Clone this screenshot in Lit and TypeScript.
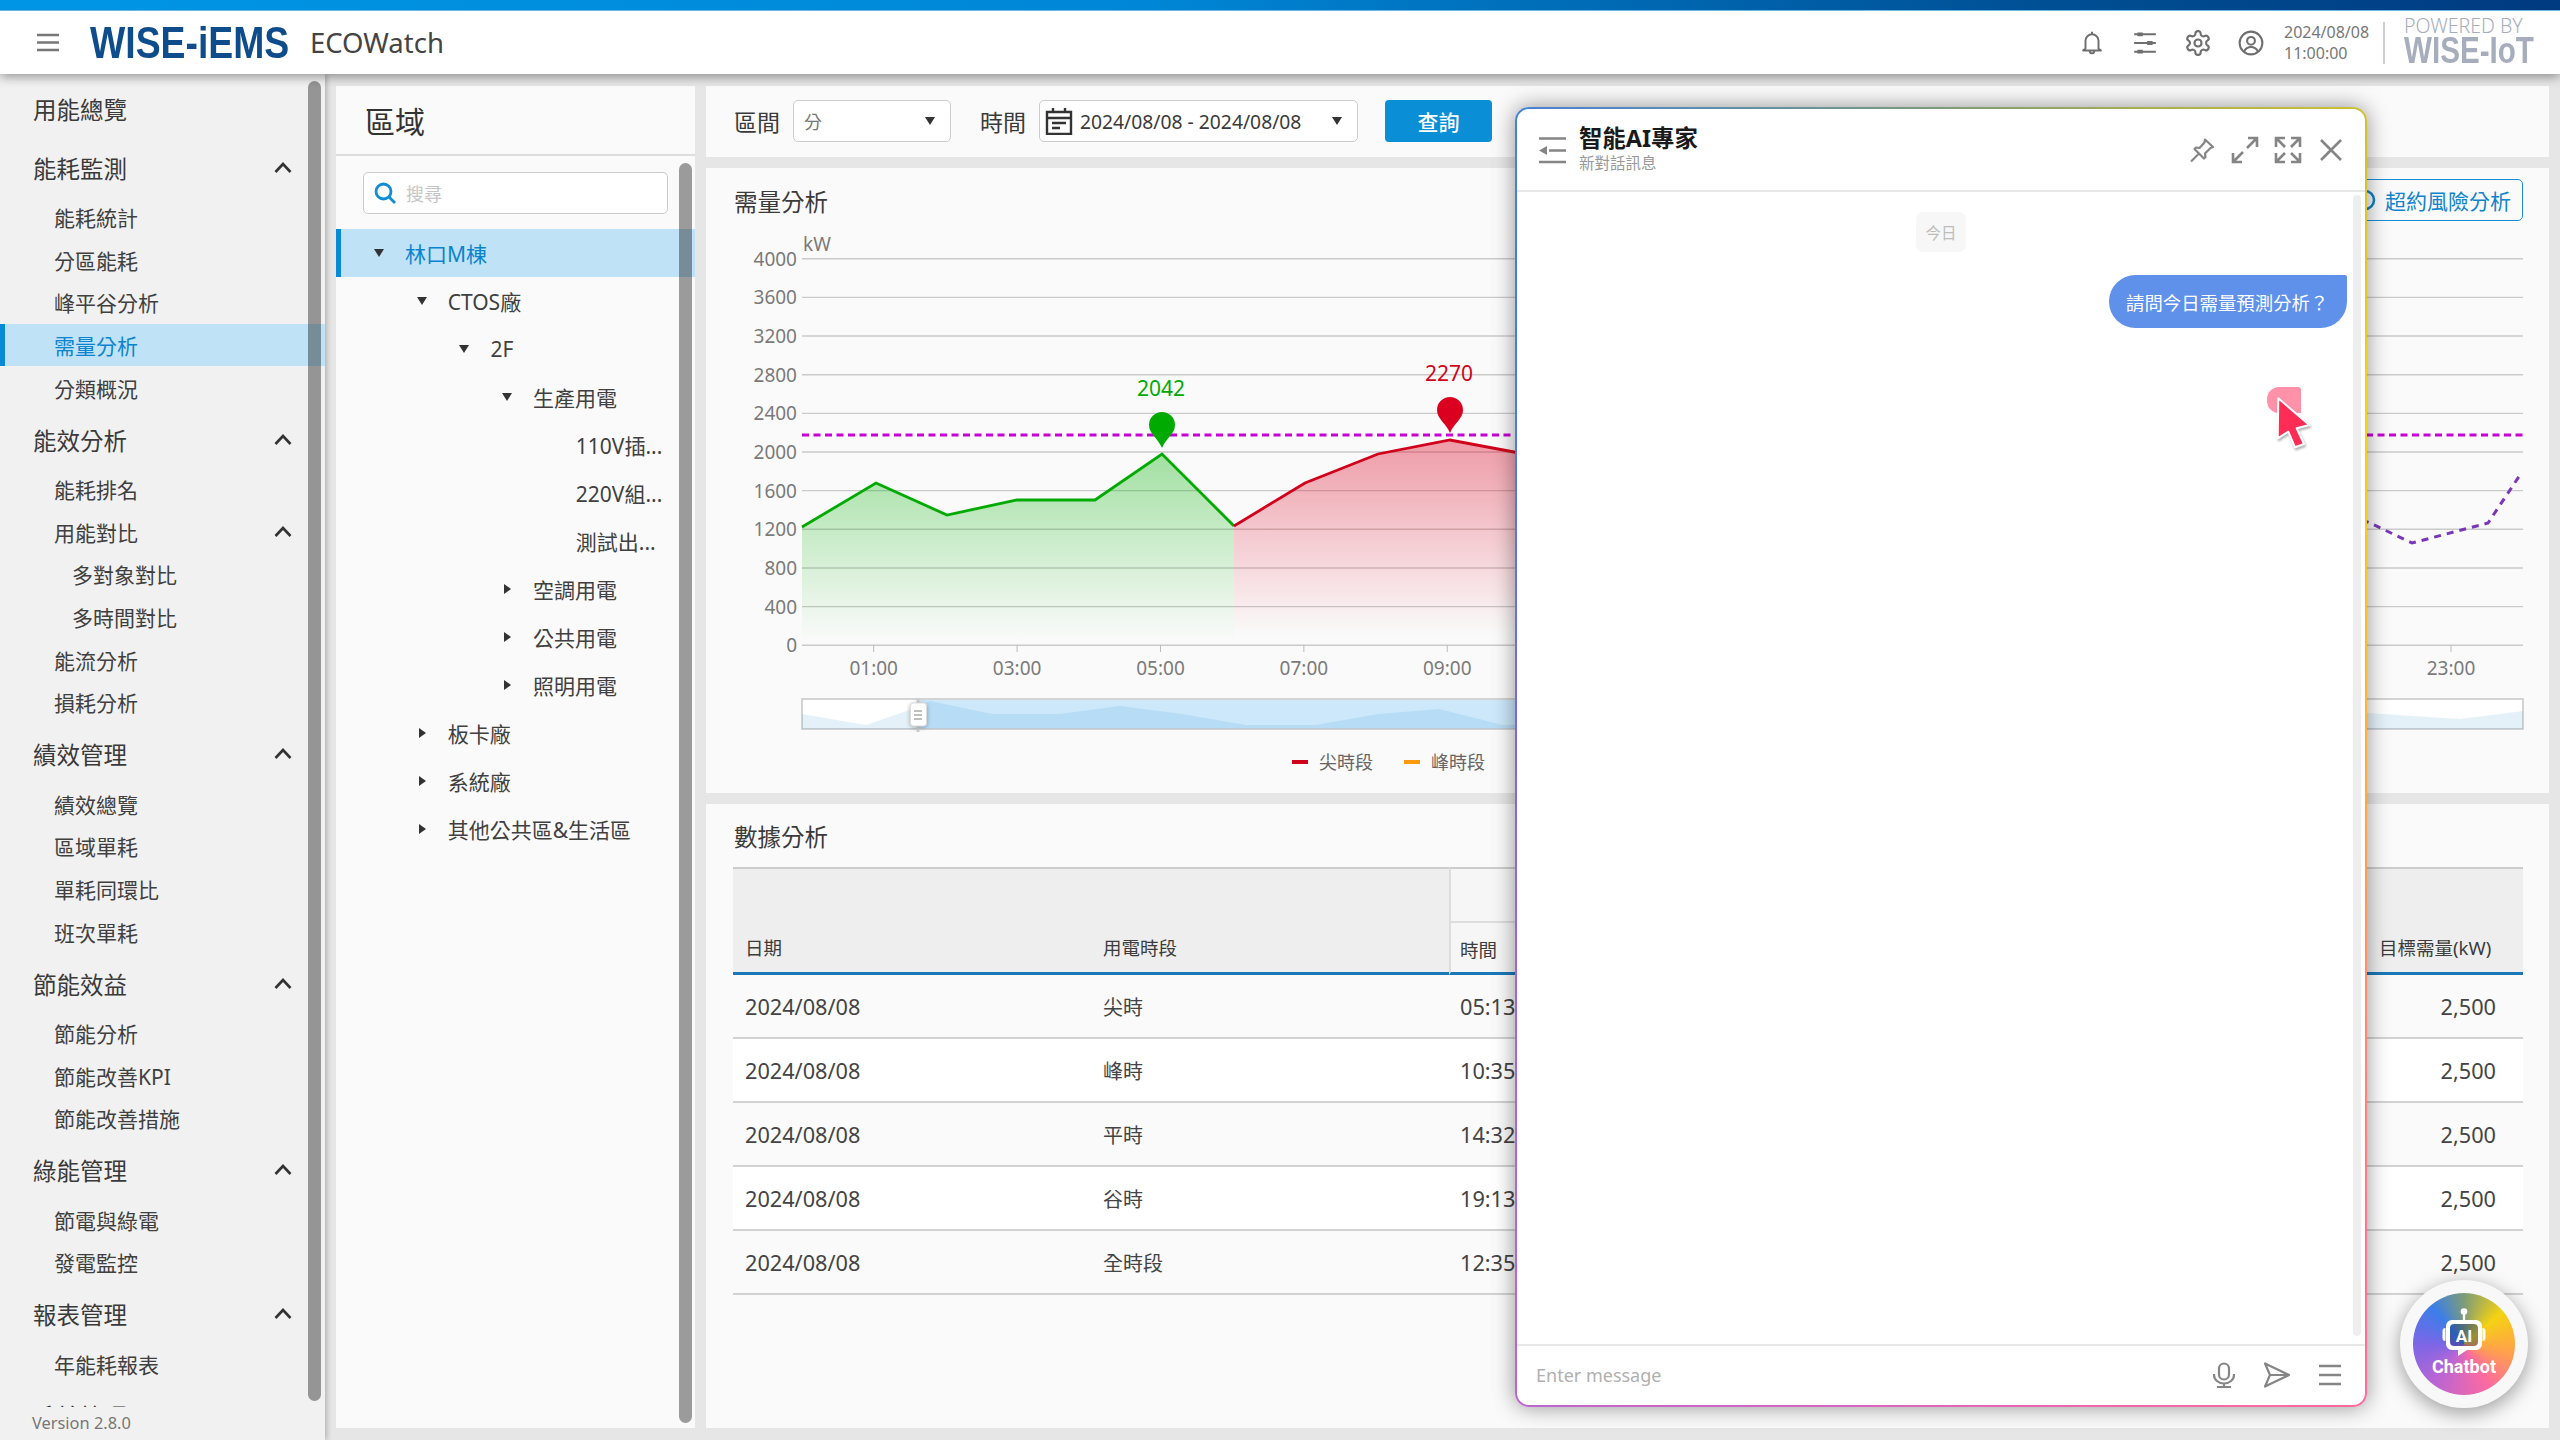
import { LitElement, html, svg, css } from "lit";
import { customElement } from "lit/decorators.js";

const NAV = [
  { title: "用能總覽", items: [] },
  {
    title: "能耗監測",
    open: true,
    items: [
      { label: "能耗統計" },
      { label: "分區能耗" },
      { label: "峰平谷分析" },
      { label: "需量分析", active: true },
      { label: "分類概況" },
    ],
  },
  {
    title: "能效分析",
    open: true,
    items: [
      { label: "能耗排名" },
      { label: "用能對比", open: true },
      { label: "多對象對比", deep: true },
      { label: "多時間對比", deep: true },
      { label: "能流分析" },
      { label: "損耗分析" },
    ],
  },
  {
    title: "績效管理",
    open: true,
    items: [{ label: "績效總覽" }, { label: "區域單耗" }, { label: "單耗同環比" }, { label: "班次單耗" }],
  },
  {
    title: "節能效益",
    open: true,
    items: [{ label: "節能分析" }, { label: "節能改善KPI" }, { label: "節能改善措施" }],
  },
  { title: "綠能管理", open: true, items: [{ label: "節電與綠電" }, { label: "發電監控" }] },
  { title: "報表管理", open: true, items: [{ label: "年能耗報表" }] },
  { title: "系統管理", open: true, items: [] },
] as { title: string; open?: boolean; items: { label: string; open?: boolean; deep?: boolean; active?: boolean }[] }[];

const TREE = [
  { label: "林口M棟", depth: 0, caret: "down", active: true },
  { label: "CTOS廠", depth: 1, caret: "down" },
  { label: "2F", depth: 2, caret: "down" },
  { label: "生產用電", depth: 3, caret: "down" },
  { label: "110V插...", depth: 4 },
  { label: "220V組...", depth: 4 },
  { label: "測試出...", depth: 4 },
  { label: "空調用電", depth: 3, caret: "right" },
  { label: "公共用電", depth: 3, caret: "right" },
  { label: "照明用電", depth: 3, caret: "right" },
  { label: "板卡廠", depth: 1, caret: "right" },
  { label: "系統廠", depth: 1, caret: "right" },
  { label: "其他公共區&生活區", depth: 1, caret: "right" },
] as { label: string; depth: number; caret?: string; active?: boolean }[];

const ROWS = [
  ["2024/08/08", "尖時", "05:13", "2,500"],
  ["2024/08/08", "峰時", "10:35", "2,500"],
  ["2024/08/08", "平時", "14:32", "2,500"],
  ["2024/08/08", "谷時", "19:13", "2,500"],
  ["2024/08/08", "全時段", "12:35", "2,500"],
];

const gridY = (v: number) => 645.3 - (v / 400) * 38.66;
const GREEN = "802,527 876,483 947,515 1017,500 1095,500 1162,454 1234,526";
const RED = "1234,526 1305,483 1378,454 1450,440 1514,452 1600,470";
const SLIDER_AREA =
  "802,729 802,714 866,725 918,707 930,701 992,714 1059,714 1120,706 1182,714 1246,725 1316,725 1378,714 1439,709 1503,725 2367,713 2460,719 2523,711 2523,729";

function pin(x: number, top: number, fill: string) {
  const c = top + 13;
  const tip = top + 36;
  return svg`<path fill=${fill} d="M${x} ${tip}C${x - 4} ${tip - 10} ${x - 13} ${c + 9} ${x - 13} ${c}A13 13 0 1 1 ${x + 13} ${c}C${x + 13} ${c + 9} ${x + 4} ${tip - 10} ${x} ${tip}Z" />`;
}

@customElement("app-root")
export class AppRoot extends LitElement {
  static styles = css`
    :host {
      display: block;
      position: relative;
      width: 2560px;
      height: 1440px;
      overflow: hidden;
      background: #e6e6e6;
      color: #444;
      font-family: "Noto Sans", "Noto Sans CJK TC", sans-serif;
    }

    /* top bar */
    .top {
      position: relative;
      z-index: 3;
      box-shadow: 0 3px 10px rgba(0, 0, 0, 0.38);
    }
    .strip {
      height: 11px;
      background: linear-gradient(90deg, #0096e6 0%, #0086d6 45%, #004f94 80%, #003a80 100%);
      border-bottom: 1px solid #6db7e6;
      box-sizing: border-box;
    }
    .bar {
      height: 63px;
      background: #fff;
      display: flex;
      align-items: center;
      padding-right: 27px;
    }
    .burger {
      width: 22px;
      height: 19px;
      margin-left: 37px;
      color: #777;
    }
    .logo {
      margin-left: 31px;
      width: 198px;
      white-space: nowrap;
      font: 700 45px/64px "Liberation Sans", sans-serif;
      color: #0f4c8c;
      transform: scaleX(0.83);
      transform-origin: 0 50%;
    }
    .product {
      margin-left: 22px;
      font-size: 27.5px;
      color: #444;
    }
    .tools {
      margin-left: auto;
      display: flex;
      align-items: center;
      gap: 27px;
      color: #6f6f6f;
    }
    .tools svg {
      width: 26px;
      height: 26px;
      display: block;
    }
    .clock {
      margin-left: 20px;
      font-size: 16px;
      line-height: 21px;
      color: #777;
      width: 87px;
      white-space: nowrap;
    }
    .sep {
      width: 2px;
      height: 42px;
      margin: 0 19px 0 12px;
      background: #d0d0d0;
    }
    .powered {
      width: 129px;
      padding-bottom: 6px;
      color: #a6adbc;
      white-space: nowrap;
    }
    .powered small {
      display: block;
      font-size: 19.5px;
      line-height: 22px;
      font-weight: 300;
    }
    .powered b {
      display: block;
      font: 700 37px/28px "Liberation Sans", sans-serif;
      transform: scaleX(0.8);
      transform-origin: 0 50%;
    }

    .main {
      display: flex;
      height: 1366px;
    }

    /* left menu */
    .side {
      position: relative;
      width: 325px;
      flex: none;
      display: flex;
      flex-direction: column;
      background: #f1f1f1;
      box-shadow: 2px 0 5px rgba(0, 0, 0, 0.22);
    }
    .nav {
      flex: 1;
      overflow: hidden;
      padding-top: 7px;
    }
    .head {
      height: 56px;
      margin-bottom: 0;
      padding-left: 33px;
      display: flex;
      align-items: center;
      font-size: 23.5px;
      color: #3a3a3a;
      position: relative;
    }
    .group {
      margin-bottom: 2.7px;
    }
    .item {
      height: 42.67px;
      padding-left: 54px;
      display: flex;
      align-items: center;
      font-size: 21px;
      color: #404040;
      position: relative;
      box-sizing: border-box;
    }
    .item.deep {
      padding-left: 72px;
    }
    .item.active {
      background: #bfe2f7;
      color: #0b84cf;
      border-left: 5px solid #0a8ad6;
      padding-left: 49px;
    }
    .chev {
      position: absolute;
      left: 274px;
      top: 50%;
      width: 18px;
      height: 11px;
      margin-top: -6px;
      color: #333;
    }
    .version {
      height: 33px;
      padding-left: 32px;
      font-size: 16.4px;
      line-height: 32px;
      color: #777;
      background: #f1f1f1;
    }
    .thumb {
      position: absolute;
      background: rgba(0, 0, 0, 0.38);
      border-radius: 7px;
      width: 13px;
    }
    .side .thumb {
      left: 308px;
      top: 7px;
      height: 1320px;
    }

    /* area tree */
    .tree {
      position: relative;
      width: 359px;
      flex: none;
      margin: 12px 0 12px 11px;
      background: #fafafa;
    }
    .tree-title {
      height: 70px;
      box-sizing: border-box;
      border-bottom: 2px solid #ddd;
      padding-left: 29px;
      font-size: 30px;
      line-height: 72px;
      color: #333;
    }
    .search {
      margin: 16px 0 15px 27px;
      width: 305px;
      height: 42px;
      box-sizing: border-box;
      border: 1.5px solid #ccc;
      border-radius: 5px;
      background: #fff;
      display: flex;
      align-items: center;
      padding-left: 10px;
      gap: 10px;
      font-size: 18px;
      color: #c6c6c6;
    }
    .search svg {
      width: 22px;
      height: 22px;
      color: #0e8ed6;
    }
    .node {
      height: 48px;
      padding-bottom: 1px;
      display: flex;
      align-items: center;
      font-size: 21px;
      color: #404040;
      white-space: nowrap;
      box-sizing: border-box;
    }
    .node.active {
      background: #bfe2f7;
      color: #0b84cf;
      box-shadow: inset 5px 0 0 #0a8ad6;
    }
    .caret {
      width: 31px;
      flex: none;
      display: flex;
    }
    .caret.down::before {
      content: "";
      border-left: 5.5px solid transparent;
      border-right: 5.5px solid transparent;
      border-top: 8px solid #333;
    }
    .caret.right::before {
      content: "";
      margin-left: 2px;
      border-top: 5px solid transparent;
      border-bottom: 5px solid transparent;
      border-left: 7px solid #333;
    }
    .tree .thumb {
      left: 343px;
      top: 77px;
      height: 1260px;
    }

    /* content column */
    .content {
      width: 1843px;
      flex: none;
      margin: 12px 11px 12px 11px;
      display: flex;
      flex-direction: column;
      gap: 11px;
    }
    .panel {
      background: #fafafa;
    }
    .filters {
      height: 71px;
      display: flex;
      align-items: center;
      padding: 0 0 1px 28px;
      box-sizing: border-box;
    }
    .filters label {
      font-size: 23px;
      color: #3a3a3a;
      margin-right: 13px;
    }
    .select {
      height: 42px;
      box-sizing: border-box;
      border: 1.5px solid #ccc;
      border-radius: 5px;
      background: #fff;
      display: flex;
      align-items: center;
      position: relative;
      font-size: 19.3px;
      color: #3a3a3a;
    }
    .select::after {
      content: "";
      margin-left: auto;
      margin-right: 15px;
      border-left: 5.5px solid transparent;
      border-right: 5.5px solid transparent;
      border-top: 8px solid #333;
    }
    .range {
      width: 158px;
      padding-left: 10px;
      margin-right: 29px;
      color: #777;
      font-size: 18px;
    }
    .dates {
      width: 319px;
      padding-left: 5px;
      margin-right: 27px;
    }
    .dates svg {
      width: 28px;
      height: 28px;
      margin-right: 7px;
      color: #333;
    }
    .query {
      width: 107px;
      height: 42px;
      border-radius: 4px;
      background: #0a8ed6;
      color: #fff;
      font-size: 21px;
      font-weight: 500;
      display: flex;
      align-items: center;
      justify-content: center;
    }

    .chart {
      height: 625px;
    }
    .chart-head {
      height: 60px;
      box-sizing: border-box;
      padding: 5px 26px 0 28px;
      display: flex;
      align-items: center;
      justify-content: space-between;
    }
    .title {
      font-size: 23.5px;
      color: #3a3a3a;
    }
    .risk {
      height: 42px;
      margin-top: -2px;
      box-sizing: border-box;
      border: 1.5px solid #1a8fd8;
      border-radius: 5px;
      display: flex;
      align-items: center;
      gap: 9px;
      padding: 0 11px 0 6px;
      font-size: 21px;
      color: #0f84cc;
      background: #fafafa;
    }
    .risk svg {
      width: 22px;
      height: 22px;
    }
    .plot {
      display: block;
      width: 1843px;
      height: 565px;
    }
    .plot text {
      font-family: "Noto Sans", "Noto Sans CJK TC", sans-serif;
    }
    .axis {
      font-size: 19px;
      fill: #7a7a7a;
    }
    .mark {
      font-size: 21px;
    }
    .legend {
      font-size: 18px;
      fill: #666;
    }
    .handle {
      filter: drop-shadow(0 1px 2px rgba(0, 0, 0, 0.3));
    }

    .table-card {
      flex: 1;
      padding: 0 26px 0 27px;
    }
    .table-title {
      height: 63px;
      display: flex;
      align-items: center;
      padding-left: 1px;
    }
    .grid {
      display: grid;
      grid-template-columns: 358px 358px 1fr 156px;
    }
    .th {
      height: 108px;
      box-sizing: border-box;
      border-top: 2px solid #ccc;
      border-bottom: 3px solid #1a78b8;
      background: #eee;
      display: flex;
      align-items: flex-end;
      padding: 0 0 11px 12px;
      font-size: 18.5px;
      line-height: 26px;
      color: #3c3c3c;
    }
    .th.time {
      display: block;
      padding: 0;
      background: #f6f6f6;
      border-left: 2px solid #ddd;
    }
    .th.time span {
      display: block;
      margin-top: 52px;
      border-top: 2px solid #ddd;
      padding: 14px 0 0 9px;
    }
    .td {
      height: 64px;
      box-sizing: border-box;
      border-bottom: 2px solid #d2d2d2;
      display: flex;
      align-items: center;
      padding-left: 12px;
      font-size: 21.7px;
      color: #444;
      white-space: nowrap;
    }
    .td.odd {
      background: #fafafa;
    }
    .td.even {
      background: #fff;
    }
    .td.kind {
      font-size: 20px;
    }
    .td.num {
      justify-content: flex-end;
      padding-right: 27px;
    }
    .td.clock-cell {
      padding-left: 11px;
    }

    /* assistant window */
    .chat {
      position: absolute;
      z-index: 4;
      left: 1515px;
      top: 107px;
      width: 852px;
      height: 1300px;
      box-sizing: border-box;
      padding: 2px;
      border-radius: 14px;
      background: conic-gradient(
        #7d9c78,
        #f5d213 50deg,
        #ffa24a 100deg,
        #fb6aa0 150deg,
        #b765d6 220deg,
        #7c66e6 270deg,
        #3c7ee8 320deg,
        #7d9c78
      );
      box-shadow: 0 0 22px rgba(0, 0, 0, 0.42);
    }
    .chat-in {
      position: relative;
      height: 100%;
      border-radius: 12px;
      background: #fff;
      display: flex;
      flex-direction: column;
    }
    .chat-head {
      height: 83px;
      flex: none;
      box-sizing: border-box;
      border-bottom: 2px solid #e8e8e8;
      display: flex;
      align-items: center;
      padding: 0 20px 0 21px;
      color: #858585;
    }
    .chat-head > svg {
      width: 28px;
      height: 28px;
      flex: none;
    }
    .chat-name {
      margin: -1px 0 0 13px;
    }
    .chat-name b {
      display: block;
      font-size: 23.4px;
      line-height: 29px;
      font-weight: 700;
      color: #1a1a1a;
    }
    .chat-name small {
      display: block;
      font-size: 15.5px;
      line-height: 21px;
      color: #999;
    }
    .chat-acts {
      margin-left: auto;
      display: flex;
      gap: 15px;
    }
    .chat-acts svg {
      width: 28px;
      height: 28px;
      display: block;
    }
    .chat-log {
      flex: 1;
      position: relative;
      display: flex;
      flex-direction: column;
      align-items: center;
      padding-top: 20px;
    }
    .chip {
      width: 50px;
      height: 40px;
      border-radius: 7px;
      background: #f7f7f7;
      color: #bdbdbd;
      font-size: 15.5px;
      display: flex;
      align-items: center;
      justify-content: center;
    }
    .bubble {
      align-self: flex-end;
      margin: 23px 18px 0 0;
      height: 53px;
      width: 238px;
      box-sizing: border-box;
      border-radius: 27px 2px 27px 27px;
      background: #5f90ea;
      color: #fff;
      font-size: 18.4px;
      display: flex;
      align-items: center;
      padding-left: 17px;
      white-space: nowrap;
    }
    .chat-log .thumb {
      left: 836px;
      top: 3px;
      width: 8px;
      height: 1141px;
      background: #eee;
    }
    .chat-foot {
      height: 61px;
      flex: none;
      box-sizing: border-box;
      border-top: 2px solid #e8e8e8;
      display: flex;
      align-items: center;
      padding: 0 22px 2px 19px;
      color: #858585;
    }
    .chat-foot span {
      font-size: 18px;
      color: #b0b0b0;
    }
    .chat-foot div {
      margin-left: auto;
      display: flex;
      gap: 27px;
    }
    .chat-foot svg {
      width: 26px;
      height: 26px;
      display: block;
    }

    /* floating things */
    .pointer {
      position: absolute;
      z-index: 5;
      left: 2260px;
      top: 380px;
      width: 60px;
      height: 75px;
    }
    .bot {
      position: absolute;
      z-index: 5;
      left: 2400px;
      top: 1280px;
      width: 128px;
      height: 128px;
      border-radius: 50%;
      background: #f8f8f8;
      box-shadow: 0 5px 20px rgba(0, 0, 0, 0.38);
      display: flex;
      align-items: center;
      justify-content: center;
    }
    .bot-face {
      width: 102px;
      height: 102px;
      box-sizing: border-box;
      padding-top: 15px;
      border-radius: 50%;
      background: conic-gradient(
        #7d9c78,
        #f5d213 50deg,
        #ffa24a 100deg,
        #fb6aa0 150deg,
        #b765d6 220deg,
        #7c66e6 270deg,
        #3c7ee8 320deg,
        #7d9c78
      );
      display: flex;
      flex-direction: column;
      align-items: center;
      color: #fff;
      font: 700 18px/20px Roboto, sans-serif;
    }
    .bot-face svg {
      width: 46px;
      height: 52px;
      margin-bottom: -3px;
      flex: none;
    }
    .bot-face svg text {
      font: 700 17px Roboto, sans-serif;
      fill: #fff;
    }
  `;

  renderNav() {
    const chev = html`<svg class="chev" viewBox="0 0 18 11" fill="none" stroke="currentColor" stroke-width="2.6">
      <path d="M1.5 10 9 2l7.5 8" />
    </svg>`;
    return NAV.map(
      (g) => html`<div class="group">
        <div class="head">${g.title}${g.open ? chev : ""}</div>
        ${g.items.map(
          (i) => html`<div class="item ${i.deep ? "deep" : ""} ${i.active ? "active" : ""}">
            ${i.label}${i.open ? chev : ""}
          </div>`
        )}
      </div>`
    );
  }

  renderChart() {
    const labels = [4000, 3600, 3200, 2800, 2400, 2000, 1600, 1200, 800, 400, 0];
    const hours = [1, 3, 5, 7, 9, 11, 13, 15, 17, 19, 21, 23];
    return html`<svg class="plot" viewBox="706 228 1843 565">
      <defs>
        <linearGradient id="gr" gradientUnits="userSpaceOnUse" x1="0" y1="450" x2="0" y2="640">
          <stop offset="0" stop-color="#00b000" stop-opacity=".36" />
          <stop offset="1" stop-color="#00b000" stop-opacity="0" />
        </linearGradient>
        <linearGradient id="rd" gradientUnits="userSpaceOnUse" x1="0" y1="440" x2="0" y2="635">
          <stop offset="0" stop-color="#dc0020" stop-opacity=".38" />
          <stop offset="1" stop-color="#dc0020" stop-opacity="0" />
        </linearGradient>
      </defs>
      <text x="803" y="251" class="axis">kW</text>
      ${labels.map(
        (v) => svg`<line x1="802" x2="2523" y1=${gridY(v)} y2=${gridY(v)} stroke="#cacaca" stroke-width="1.4" />
          <text x="797" y=${gridY(v) + 7} text-anchor="end" class="axis">${v}</text>`
      )}
      ${hours.map((h) => {
        const x = 802 + (h * 1649) / 23;
        return svg`<line x1=${x} x2=${x} y1="645" y2="652" stroke="#bbb" />
          <text x=${x} y="675" text-anchor="middle" class="axis">${String(h).padStart(2, "0")}:00</text>`;
      })}
      <polygon points="802,645 ${GREEN} 1234,645" fill="url(#gr)" />
      <polygon points="1234,645 ${RED} 1600,645" fill="url(#rd)" />
      <polyline points=${GREEN} fill="none" stroke="#00aa00" stroke-width="2.8" />
      <polyline points=${RED} fill="none" stroke="#d0021b" stroke-width="2.8" />
      <polyline
        points="2362,520 2370,523 2412,543 2488,523 2522,472"
        fill="none"
        stroke="#7a35b8"
        stroke-width="3"
        stroke-dasharray="7 6"
      />
      <line x1="802" x2="2523" y1="435" y2="435" stroke="#c800d8" stroke-width="3" stroke-dasharray="7 4.5" />
      ${pin(1162, 412, "#00aa00")} ${pin(1450, 397, "#dc0020")}
      <text x="1161" y="396" text-anchor="middle" class="mark" fill="#00aa00">2042</text>
      <text x="1449" y="381" text-anchor="middle" class="mark" fill="#d0021b">2270</text>

      <rect x="802" y="699" width="1721" height="30" fill="#fff" stroke="#c6c6c6" stroke-width="1.5" />
      <polygon points=${SLIDER_AREA} fill="#0078c8" opacity=".1" />
      <rect x="918" y="700" width="1000" height="28" fill="#008ce6" opacity=".2" />
      <line x1="918" x2="918" y1="698" y2="732" stroke="#cfcfcf" stroke-width="3" />
      <g class="handle">
        <rect x="910.5" y="703" width="16" height="23" rx="3" fill="#fff" stroke="#ddd" />
        <path d="M914 711h8M914 715h8M914 719h8" stroke="#aaa" stroke-width="1.4" />
      </g>

      <rect x="1292" y="760" width="16" height="4" fill="#d0021b" />
      <text x="1319" y="769" class="legend">尖時段</text>
      <rect x="1404" y="760" width="16" height="4" fill="#ff9a0e" />
      <text x="1431" y="769" class="legend">峰時段</text>
    </svg>`;
  }

  renderChat() {
    return html`<div class="chat">
      <div class="chat-in">
        <div class="chat-head">
          <svg viewBox="0 0 28 28" fill="none" stroke="currentColor" stroke-width="2.4">
            <path d="M1 2.5h27M11 14.5h17M1 26h27" />
            <path d="M1 14.5 9 10v9z" fill="currentColor" stroke="none" />
          </svg>
          <div class="chat-name">
            <b>智能AI專家</b>
            <small>新對話訊息</small>
          </div>
          <div class="chat-acts">
            <svg viewBox="0 0 28 28" fill="none" stroke="currentColor" stroke-width="2.2" stroke-linejoin="round">
              <path d="M17 3.5 25 11l-2.5 1-5.5 5.5.5 3.5-1.5 1.5-9.5-9.5L8 11.5l3.5.5L16.5 6.5z" />
              <path d="M11 17.5 3 25.5" />
            </svg>
            <svg viewBox="0 0 28 28" fill="none" stroke="currentColor" stroke-width="2.6">
              <path d="M17 2h9v9M26 2 16 12M11 26H2v-9M2 26l10-10" />
            </svg>
            <svg viewBox="0 0 28 28" fill="none" stroke="currentColor" stroke-width="2.6">
              <path d="M11 2H2v9M2 2l9 9M17 2h9v9M26 2l-9 9M11 26H2v-9M2 26l9-9M17 26h9v-9M26 26l-9-9" />
            </svg>
            <svg viewBox="0 0 28 28" fill="none" stroke="currentColor" stroke-width="2.6">
              <path d="m4 4 20 20M24 4 4 24" />
            </svg>
          </div>
        </div>
        <div class="chat-log">
          <div class="chip">今日</div>
          <div class="bubble">請問今日需量預測分析？</div>
          <div class="thumb"></div>
        </div>
        <div class="chat-foot">
          <span>Enter message</span>
          <div>
            <svg viewBox="0 0 26 26" fill="none" stroke="currentColor" stroke-width="2.2">
              <rect x="8" y="1.5" width="10" height="16" rx="5" />
              <path d="M3 12v1a10 8.5 0 0 0 20 0v-1M13 21.5v3M6 25h14" />
            </svg>
            <svg viewBox="0 0 26 26" fill="none" stroke="currentColor" stroke-width="2.2" stroke-linejoin="round">
              <path d="M1 1.5 25 13 1 24.5 6 13zM6 13h19" />
            </svg>
            <svg viewBox="0 0 26 26" fill="none" stroke="currentColor" stroke-width="2.6">
              <path d="M2 4h22M2 13h22M2 22h22" />
            </svg>
          </div>
        </div>
      </div>
    </div>`;
  }

  render() {
    return html`
      <div class="top">
        <div class="strip"></div>
        <div class="bar">
          <svg class="burger" viewBox="0 0 22 19" fill="none" stroke="currentColor" stroke-width="2.4">
            <path d="M0 2h22M0 9.5h22M0 17h22" />
          </svg>
          <div class="logo">WISE-iEMS</div>
          <div class="product">ECOWatch</div>
          <div class="tools">
            <svg viewBox="0 0 24 24" fill="none" stroke="currentColor" stroke-width="1.8" stroke-linejoin="round">
              <path d="M12 1.5V4M6 17v-7a6 6 0 0 1 12 0v7l2.2 2H3.8zM10 19.5a2 2 0 0 0 4 0" />
            </svg>
            <svg viewBox="0 0 24 24" fill="none" stroke="currentColor" stroke-width="1.8">
              <path d="M2 4h20M2 12h20M2 20h20" />
              <path d="M5 2.2h5v3.6H5zM14 10.2h5v3.6h-5zM5 18.2h5v3.6H5z" fill="currentColor" stroke="none" />
            </svg>
            <svg viewBox="1 1 22 22" fill="none" stroke="currentColor" stroke-width="1.8">
              <path
                d="M12.22 2h-.44a2 2 0 0 0-2 2v.18a2 2 0 0 1-1 1.73l-.43.25a2 2 0 0 1-2 0l-.15-.08a2 2 0 0 0-2.73.73l-.22.38a2 2 0 0 0 .73 2.73l.15.1a2 2 0 0 1 1 1.72v.51a2 2 0 0 1-1 1.74l-.15.09a2 2 0 0 0-.73 2.73l.22.38a2 2 0 0 0 2.73.73l.15-.08a2 2 0 0 1 2 0l.43.25a2 2 0 0 1 1 1.73V20a2 2 0 0 0 2 2h.44a2 2 0 0 0 2-2v-.18a2 2 0 0 1 1-1.73l.43-.25a2 2 0 0 1 2 0l.15.08a2 2 0 0 0 2.73-.73l.22-.39a2 2 0 0 0-.73-2.73l-.15-.08a2 2 0 0 1-1-1.74v-.5a2 2 0 0 1 1-1.74l.15-.09a2 2 0 0 0 .73-2.73l-.22-.38a2 2 0 0 0-2.73-.73l-.15.08a2 2 0 0 1-2 0l-.43-.25a2 2 0 0 1-1-1.73V4a2 2 0 0 0-2-2z"
              />
              <circle cx="12" cy="12" r="3" />
            </svg>
            <svg viewBox="0 0 24 24" fill="none" stroke="currentColor" stroke-width="1.9">
              <circle cx="12" cy="12" r="10.5" />
              <circle cx="12" cy="10" r="3.6" />
              <path d="M5.8 19.5a7 7 0 0 1 12.4 0" />
            </svg>
          </div>
          <div class="clock">2024/08/08<br />11:00:00</div>
          <div class="sep"></div>
          <div class="powered"><small>POWERED BY</small><b>WISE-IoT</b></div>
        </div>
      </div>

      <div class="main">
        <aside class="side">
          <div class="nav">${this.renderNav()}</div>
          <div class="version">Version 2.8.0</div>
          <div class="thumb"></div>
        </aside>

        <section class="tree">
          <div class="tree-title">區域</div>
          <div class="search">
            <svg viewBox="0 0 22 22" fill="none" stroke="currentColor" stroke-width="2.8">
              <circle cx="9.5" cy="9.5" r="7.5" />
              <path d="m15 15 6 6" />
            </svg>
            搜尋
          </div>
          ${TREE.map(
            (n) => html`<div class="node ${n.active ? "active" : ""}" style="padding-left:${38 + n.depth * 42.7}px">
              <span class="caret ${n.caret ?? ""}"></span>${n.label}
            </div>`
          )}
          <div class="thumb"></div>
        </section>

        <div class="content">
          <div class="panel filters">
            <label>區間</label>
            <div class="select range">分</div>
            <label>時間</label>
            <div class="select dates">
              <svg viewBox="0 0 28 28" fill="none" stroke="currentColor" stroke-width="2.4">
                <path d="M2 5h24v22H2zM2 11h24M8 1v5M20 1v5M7 16h14M7 21h8" />
              </svg>
              2024/08/08 - 2024/08/08
            </div>
            <div class="query">查詢</div>
          </div>

          <div class="panel chart">
            <div class="chart-head">
              <div class="title">需量分析</div>
              <div class="risk">
                <svg viewBox="0 0 22 22" fill="none" stroke="currentColor" stroke-width="2.6">
                  <circle cx="11" cy="11" r="9" />
                </svg>
                超約風險分析
              </div>
            </div>
            ${this.renderChart()}
          </div>

          <div class="panel table-card">
            <div class="table-title title">數據分析</div>
            <div class="grid">
              <div class="th">日期</div>
              <div class="th">用電時段</div>
              <div class="th time"><span>時間</span></div>
              <div class="th">目標需量(kW)</div>
              ${ROWS.map((r, i) => {
                const tone = i % 2 ? "even" : "odd";
                return html`<div class="td ${tone}">${r[0]}</div>
                  <div class="td kind ${tone}">${r[1]}</div>
                  <div class="td clock-cell ${tone}">${r[2]}</div>
                  <div class="td num ${tone}">${r[3]}</div>`;
              })}
            </div>
          </div>
        </div>
      </div>

      ${this.renderChat()}

      <svg class="pointer" viewBox="2260 380 60 75">
        <path d="M2279 387h19a3 3 0 0 1 3 3v23h-22a12 12 0 0 1-12-12v-2a12 12 0 0 1 12-12z" fill="#ff92a8" />
        <polygon
          points="2278.3,398.3 2309.3,425 2296.7,428.3 2304,444 2295,447.3 2288.3,431.7 2277.7,438.3"
          fill="#ff2d55"
          stroke="#fff"
          stroke-width="2"
          stroke-linejoin="round"
          style="filter:drop-shadow(1px 2px 1px rgba(0,0,0,.3))"
        />
      </svg>

      <div class="bot">
        <div class="bot-face">
          <svg viewBox="0 0 46 52">
            <circle cx="23" cy="3.5" r="3.3" fill="#fff" />
            <path d="M23 6v6" stroke="#fff" stroke-width="2.4" />
            <path d="M4.5 20a3 3 0 0 0-3 3v7a3 3 0 0 0 3 3zM41.5 20a3 3 0 0 1 3 3v7a3 3 0 0 1-3 3z" fill="#fff" />
            <rect x="9" y="16" width="28" height="22" rx="4" fill="#12306a" opacity=".4" />
            <path
              fill-rule="evenodd"
              d="M11 12h24a6 6 0 0 1 6 6v18a6 6 0 0 1-6 6H26l-9 6v-6h-6a6 6 0 0 1-6-6V18a6 6 0 0 1 6-6zM13 16a4 4 0 0 0-4 4v14a4 4 0 0 0 4 4h20a4 4 0 0 0 4-4V20a4 4 0 0 0-4-4z"
              fill="#fff"
            />
            <text x="23" y="33.5" text-anchor="middle">AI</text>
          </svg>
          Chatbot
        </div>
      </div>
    `;
  }
}
